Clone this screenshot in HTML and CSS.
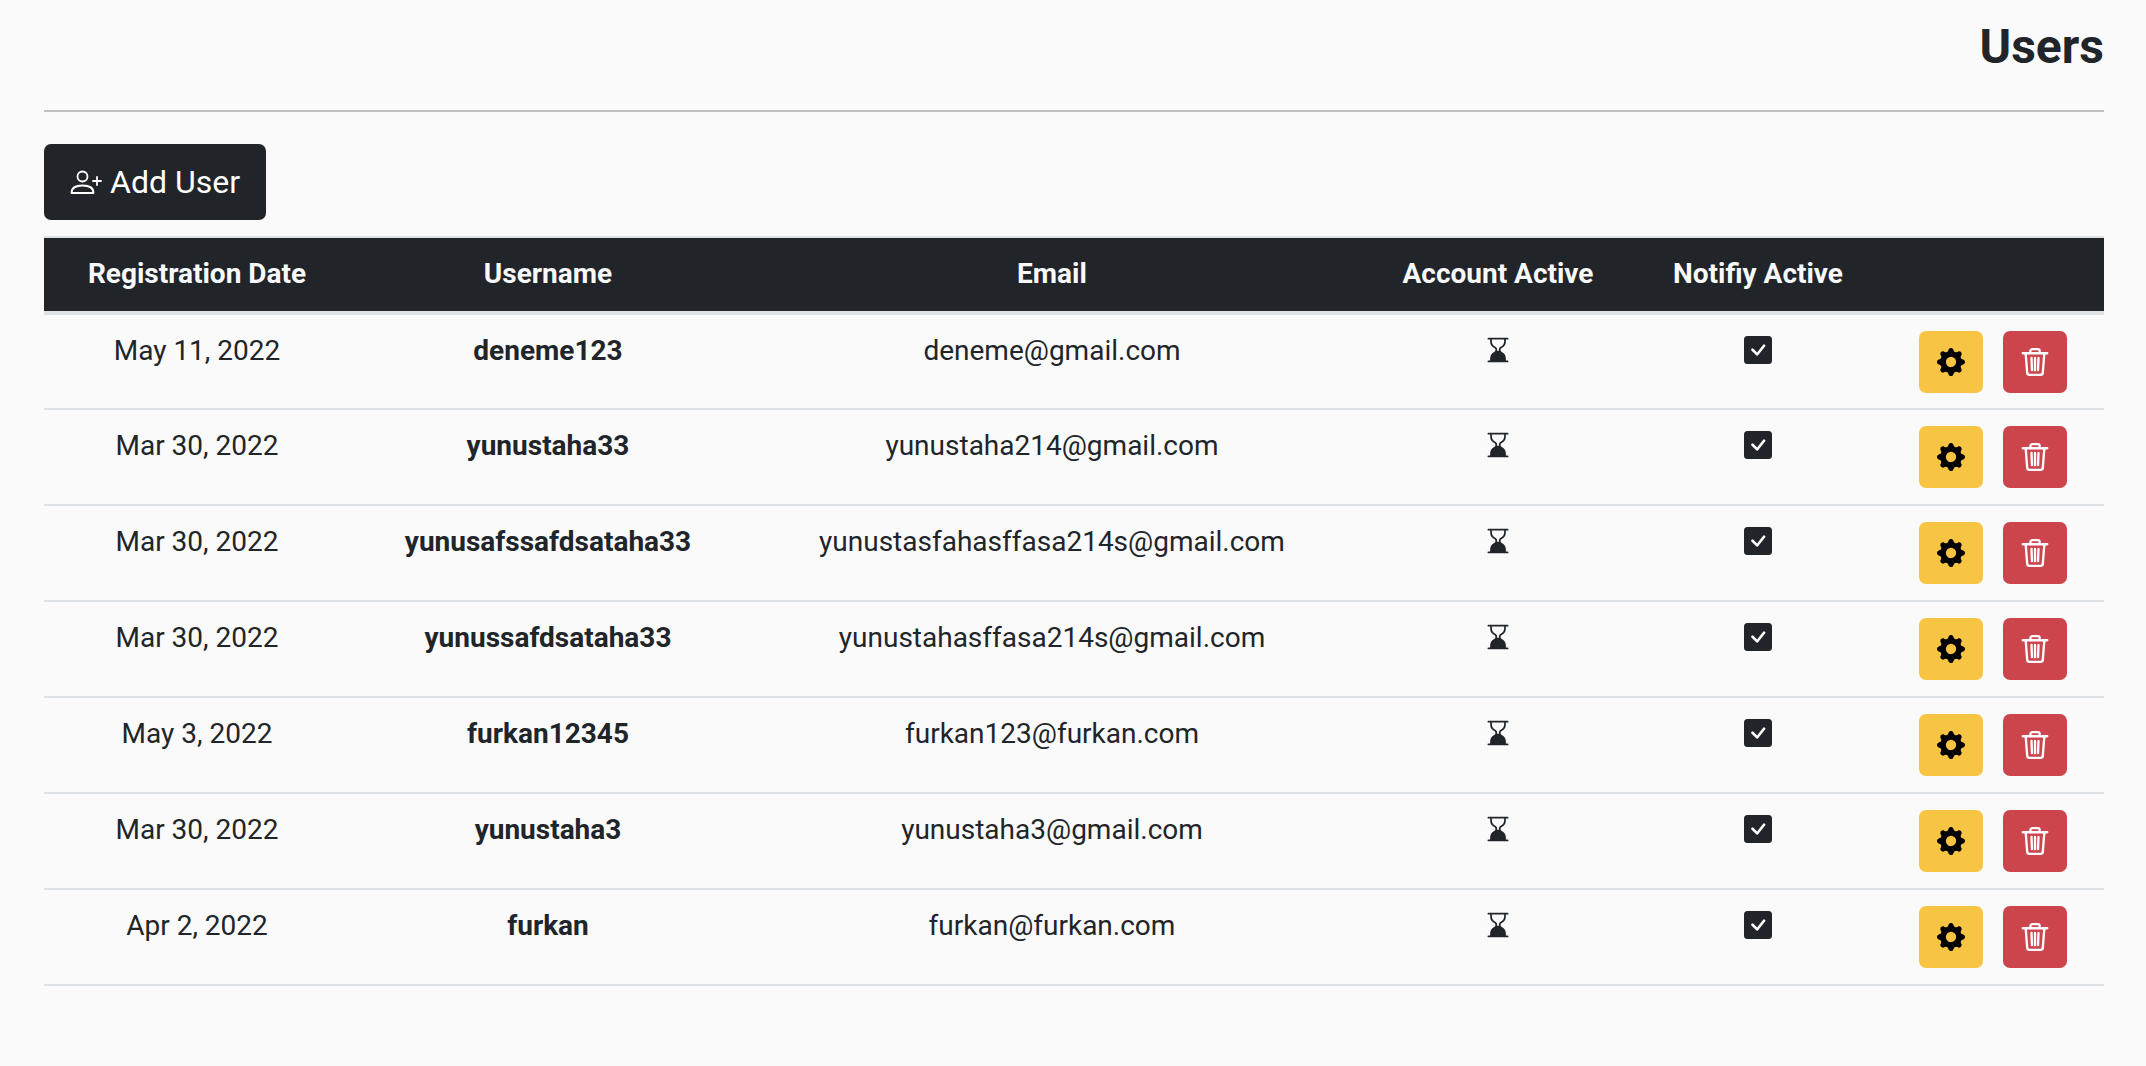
FILE: index.html
```html
<!DOCTYPE html>
<html lang="en">
<head>
<meta charset="utf-8">
<title>Users</title>
<link rel="stylesheet" href="styles.css">
</head>
<body>
<svg class="defs" width="0" height="0" aria-hidden="true">
  <symbol id="i-hour" viewBox="0 0 16 16"><path fill="currentColor" d="M2 1.500a.500.500 0 0 1 .500-.500h11a.500.500 0 0 1 0 1h-1v1a4.500 4.500 0 0 1-2.557 4.060c-.290.139-.443.377-.443.590v.700c0 .213.154.451.443.590A4.500 4.500 0 0 1 12.500 13v1h1a.500.500 0 0 1 0 1h-11a.500.500 0 1 1 0-1h1v-1a4.500 4.500 0 0 1 2.557-4.060c.290-.139.443-.377.443-.590v-.700c0-.213-.154-.451-.443-.590A4.500 4.500 0 0 1 3.500 3V2h-1a.500.500 0 0 1-.500-.500zm2.500.500v1a3.500 3.500 0 0 0 1.989 3.158c.533.256 1.011.791 1.011 1.491v.702s.180.149.500.149.500-.150.500-.150v-.700c0-.701.478-1.236 1.011-1.492A3.500 3.500 0 0 0 11.500 3V2h-7z"/></symbol>
  <symbol id="i-check" viewBox="0 0 16 16"><path fill="currentColor" d="M2 0a2 2 0 0 0-2 2v12a2 2 0 0 0 2 2h12a2 2 0 0 0 2-2V2a2 2 0 0 0-2-2H2zm10.030 4.970a.750.750 0 0 1 .011 1.050l-3.992 4.990a.750.750 0 0 1-1.080.020L4.324 8.384a.750.750 0 1 1 1.060-1.060l2.094 2.093 3.473-4.425a.750.750 0 0 1 1.080-.022z"/></symbol>
  <symbol id="i-gear" viewBox="0 0 16 16"><path fill="currentColor" d="M9.405 1.050c-.413-1.400-2.397-1.400-2.810 0l-.100.340a1.464 1.464 0 0 1-2.105.872l-.310-.170c-1.283-.698-2.686.705-1.987 1.987l.169.311c.446.820.023 1.841-.872 2.105l-.340.100c-1.400.413-1.400 2.397 0 2.810l.340.100a1.464 1.464 0 0 1 .872 2.105l-.170.310c-.698 1.283.705 2.686 1.987 1.987l.311-.169a1.464 1.464 0 0 1 2.105.872l.100.340c.413 1.400 2.397 1.400 2.810 0l.100-.340a1.464 1.464 0 0 1 2.105-.872l.310.170c1.283.698 2.686-.705 1.987-1.987l-.169-.311a1.464 1.464 0 0 1 .872-2.105l.340-.100c1.400-.413 1.400-2.397 0-2.810l-.340-.100a1.464 1.464 0 0 1-.872-2.105l.170-.310c.698-1.283-.705-2.686-1.987-1.987l-.311.169a1.464 1.464 0 0 1-2.105-.872l-.100-.340zM8 10.930a2.929 2.929 0 1 1 0-5.860 2.929 2.929 0 0 1 0 5.858z"/></symbol>
  <symbol id="i-trash" viewBox="0 0 24 24"><path fill="none" stroke="currentColor" stroke-width="2" stroke-linecap="round" stroke-linejoin="round" d="M1.500 4.500h21M4 4.500l1.300 16.600a2 2 0 0 0 2 1.900h9.400a2 2 0 0 0 2-1.900L20 4.500M8 4.500V2.700A1.700 1.700 0 0 1 9.700 1h4.600A1.700 1.700 0 0 1 16 2.700v1.800M9 8.500l.400 10.500M12 8.500V19M15 8.500 14.600 19"/></symbol>
  <symbol id="i-add" viewBox="0 0 32 24"><path fill="none" stroke="currentColor" stroke-width="1.800" stroke-linecap="round" stroke-linejoin="round" d="M12.500 1.500a5 5 0 1 1 0 10 5 5 0 0 1 0-10zM1.500 23c0-5.200 4.500-7.500 11-7.500s11 2.300 11 7.500zM27 7v8M23 11h8"/></symbol>
</svg>
<main class="page">
  <header class="title-bar"><h1 class="title">Users</h1></header>
  <div class="toolbar">
    <button class="add-btn" type="button"><svg class="add-icon"><use href="#i-add"/></svg><span>Add User</span></button>
  </div>
  <table class="users">
    <colgroup><col class="c1"><col class="c2"><col class="c3"><col class="c4"><col class="c5"><col class="c6"></colgroup>
    <thead>
      <tr><th>Registration Date</th><th>Username</th><th>Email</th><th>Account Active</th><th>Notifiy Active</th><th></th></tr>
    </thead>
    <tbody>
      <tr><td>May 11, 2022</td><td class="name">deneme123</td><td>deneme@gmail.com</td><td><svg class="status"><use href="#i-hour"/></svg></td><td><svg class="status"><use href="#i-check"/></svg></td><td class="actions"><button class="act edit" type="button"><svg><use href="#i-gear"/></svg></button><button class="act del" type="button"><svg><use href="#i-trash"/></svg></button></td></tr>
      <tr><td>Mar 30, 2022</td><td class="name">yunustaha33</td><td>yunustaha214@gmail.com</td><td><svg class="status"><use href="#i-hour"/></svg></td><td><svg class="status"><use href="#i-check"/></svg></td><td class="actions"><button class="act edit" type="button"><svg><use href="#i-gear"/></svg></button><button class="act del" type="button"><svg><use href="#i-trash"/></svg></button></td></tr>
      <tr><td>Mar 30, 2022</td><td class="name">yunusafssafdsataha33</td><td>yunustasfahasffasa214s@gmail.com</td><td><svg class="status"><use href="#i-hour"/></svg></td><td><svg class="status"><use href="#i-check"/></svg></td><td class="actions"><button class="act edit" type="button"><svg><use href="#i-gear"/></svg></button><button class="act del" type="button"><svg><use href="#i-trash"/></svg></button></td></tr>
      <tr><td>Mar 30, 2022</td><td class="name">yunussafdsataha33</td><td>yunustahasffasa214s@gmail.com</td><td><svg class="status"><use href="#i-hour"/></svg></td><td><svg class="status"><use href="#i-check"/></svg></td><td class="actions"><button class="act edit" type="button"><svg><use href="#i-gear"/></svg></button><button class="act del" type="button"><svg><use href="#i-trash"/></svg></button></td></tr>
      <tr><td>May 3, 2022</td><td class="name">furkan12345</td><td>furkan123@furkan.com</td><td><svg class="status"><use href="#i-hour"/></svg></td><td><svg class="status"><use href="#i-check"/></svg></td><td class="actions"><button class="act edit" type="button"><svg><use href="#i-gear"/></svg></button><button class="act del" type="button"><svg><use href="#i-trash"/></svg></button></td></tr>
      <tr><td>Mar 30, 2022</td><td class="name">yunustaha3</td><td>yunustaha3@gmail.com</td><td><svg class="status"><use href="#i-hour"/></svg></td><td><svg class="status"><use href="#i-check"/></svg></td><td class="actions"><button class="act edit" type="button"><svg><use href="#i-gear"/></svg></button><button class="act del" type="button"><svg><use href="#i-trash"/></svg></button></td></tr>
      <tr><td>Apr 2, 2022</td><td class="name">furkan</td><td>furkan@furkan.com</td><td><svg class="status"><use href="#i-hour"/></svg></td><td><svg class="status"><use href="#i-check"/></svg></td><td class="actions"><button class="act edit" type="button"><svg><use href="#i-gear"/></svg></button><button class="act del" type="button"><svg><use href="#i-trash"/></svg></button></td></tr>
    </tbody>
  </table>
</main>
</body>
</html>
```

FILE: styles.css
```css
* { box-sizing: border-box; }
html, body { margin: 0; height: 100%; }
body { background: #fafafa; color: #212529; font-family: Roboto, "Liberation Sans", sans-serif; font-size: 28px; overflow: hidden; }
.defs { position: absolute; }
.page { padding: 0 42px 0 44px; }
.title-bar { height: 112px; border-bottom: 2px solid #c0c0c0; display: flex; justify-content: flex-end; align-items: flex-start; }
.title { margin: 24px 0 0; font-size: 48px; font-weight: 700; line-height: 46px; color: #212529; }
.toolbar { padding-top: 32px; height: 124px; }
.add-btn { display: flex; align-items: center; gap: 8px; height: 76px; width: 222px; padding: 0 0 0 26px; background: #212529; color: #fff; border: 0; border-radius: 7px; font: 400 32px Roboto, sans-serif; }
.add-icon { width: 32px; height: 24px; }
.users { width: 2060px; table-layout: fixed; border-collapse: collapse; text-align: center; }
.c1 { width: 306px; } .c2 { width: 396px; } .c3 { width: 612px; } .c4 { width: 280px; } .c5 { width: 240px; } .c6 { width: 226px; }
th { background: #212529; color: #f8f9fa; height: 76px; padding: 0 0 2px; font-size: 28px; font-weight: 700; border-top: 2px solid #dee2e6; border-bottom: 4px solid #dee2e6; vertical-align: middle; }
td { height: 96px; padding: 12px 0 0; border-bottom: 2px solid #dee2e6; vertical-align: top; line-height: 48px; }
.name { font-weight: 700; }
.status { width: 28px; height: 28px; display: block; margin: 9px auto 0; color: #212529; }
td.actions { padding: 16px 0 0 4px; }
.act { display: inline-flex; align-items: center; justify-content: center; width: 64px; height: 62px; border: 0; border-radius: 7px; padding: 0; vertical-align: top; }
.act + .act { margin-left: 20px; }
.edit { background: #f7c444; color: #000; }
.del { background: #cc454c; color: #fff; }
.act svg { width: 28px; height: 28px; }
```
